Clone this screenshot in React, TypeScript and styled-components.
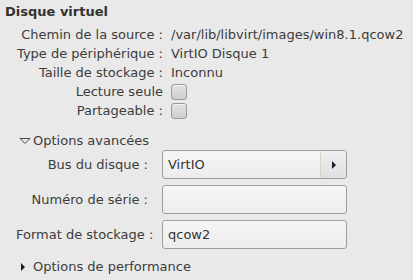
import React from 'react';
import styled, { createGlobalStyle } from 'styled-components';

const GlobalStyle = createGlobalStyle`
    html, body {
        margin: 0;
        padding: 0;
        background: #e9e9e9;
    }
    body {
        font-family: "DejaVu Sans", "Liberation Sans", sans-serif;
        font-size: 13px;
        color: #3c3c3c;
    }
`;

const Page = styled.div`
    width: 413px;
    height: 280px;
    padding: 3px 5px 0 5px;
    box-sizing: border-box;
    overflow: hidden;
`;

const Title = styled.div`
    font-weight: bold;
    line-height: 17px;
    color: #333;
`;

const InfoGrid = styled.div`
    display: grid;
    grid-template-columns: 158px 1fr;
    column-gap: 8px;
    grid-auto-rows: 19px;
    margin-top: 5px;
    align-items: center;
`;

const Label = styled.div`
    text-align: right;
    white-space: nowrap;
`;

const Value = styled.div`
    white-space: nowrap;
    display: flex;
    align-items: center;
`;

const Checkbox = styled.span`
    display: inline-block;
    width: 14px;
    height: 14px;
    border: 1px solid #9a9a9a;
    border-radius: 3px;
    background: linear-gradient(#e2e2e2, #cfcfcf);
    box-shadow: inset 0 1px 0 rgba(255, 255, 255, 0.6);
`;

const Expander = styled.div<{ $indent: number; $gap: number }>`
    display: flex;
    align-items: center;
    padding-left: ${(p) => p.$indent}px;
    height: 17px;
    gap: ${(p) => p.$gap}px;
`;

const Advanced = styled.div`
    margin-top: 12px;
`;

const FormGrid = styled.div`
    display: grid;
    grid-template-columns: 132px 185px;
    column-gap: 14px;
    row-gap: 6px;
    margin: 1px 0 0 11px;
    align-items: center;
`;

const Field = styled.div`
    height: 27px;
    border: 1px solid #9d9d9d;
    border-radius: 3px;
    background: linear-gradient(#f6f6f6, #ececec);
    box-sizing: content-box;
    display: flex;
    align-items: center;
    padding-left: 5px;
    color: #333;
`;

const Combo = styled(Field)`
    padding-left: 0;
    overflow: hidden;
`;

const ComboText = styled.div`
    flex: 1;
    height: 100%;
    display: flex;
    align-items: center;
    padding-left: 5px;
    border-right: 1px solid #d3d8c6;
`;

const ComboButton = styled.div`
    width: 25px;
    height: 100%;
    display: flex;
    align-items: center;
    justify-content: center;
    background: linear-gradient(#efefef, #e0e0e0);
`;

const Performance = styled.div`
    margin-top: 9px;
`;

const ArrowRight = () => (
    <svg width="6" height="10" viewBox="0 0 6 10">
        <path d="M1 1 L5 5 L1 9 Z" fill="#1e1e1e" />
    </svg>
);

const ArrowDown = () => (
    <svg width="12" height="8" viewBox="0 0 12 8">
        <path d="M1 1.5 L11 1.5 L6 6.5 Z" fill="none" stroke="#4a4a4a" strokeWidth="1" />
    </svg>
);

const App: React.FC = () => {
    return (
        <>
            <GlobalStyle />
            <Page>
                <Title>Disque virtuel</Title>
                <InfoGrid>
                    <Label>Chemin de la source :</Label>
                    <Value>/var/lib/libvirt/images/win8.1.qcow2</Value>
                    <Label>Type de périphérique :</Label>
                    <Value>VirtIO Disque 1</Value>
                    <Label>Taille de stockage :</Label>
                    <Value>Inconnu</Value>
                    <Label>Lecture seule</Label>
                    <Value><Checkbox /></Value>
                    <Label>Partageable :</Label>
                    <Value><Checkbox /></Value>
                </InfoGrid>

                <Advanced>
                    <Expander $indent={14} $gap={2}>
                        <ArrowDown />
                        <span>Options avancées</span>
                    </Expander>
                    <FormGrid>
                        <Label>Bus du disque :</Label>
                        <Combo>
                            <ComboText>VirtIO</ComboText>
                            <ComboButton><ArrowRight /></ComboButton>
                        </Combo>
                        <Label>Numéro de série :</Label>
                        <Field />
                        <Label>Format de stockage :</Label>
                        <Field>qcow2</Field>
                    </FormGrid>
                </Advanced>

                <Performance>
                    <Expander $indent={15} $gap={7}>
                        <ArrowRight />
                        <span>Options de performance</span>
                    </Expander>
                </Performance>
            </Page>
        </>
    );
};

export default App;
